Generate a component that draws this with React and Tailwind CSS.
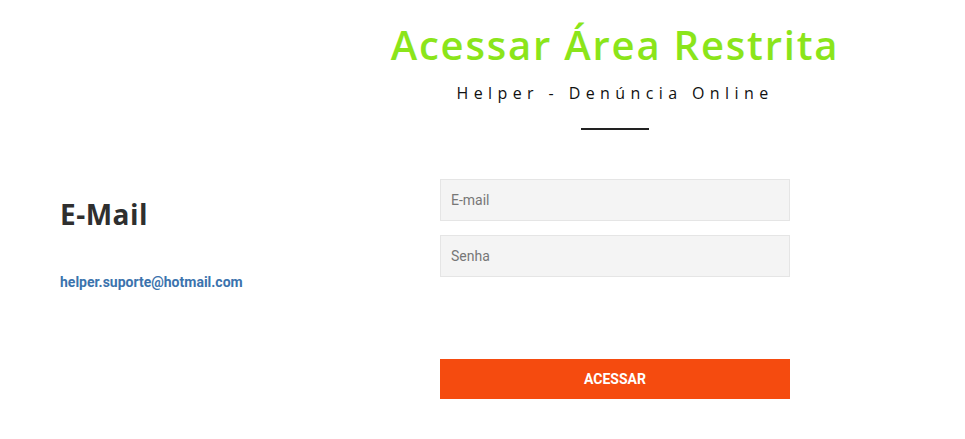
import React from 'react';

const heading = { fontFamily: '"Open Sans", "DejaVu Sans", sans-serif' };

export default function App() {
  return (
    <div className="w-[965px] h-[439px] bg-white flex font-['Roboto',sans-serif] overflow-hidden">
      {/* coluna esquerda: contato */}
      <div className="w-[440px] pl-[60px] pt-[196px]">
        <h2 style={heading} className="text-[28px] font-bold tracking-[0.5px] text-[#2f2f2f] leading-[36px]">E-Mail</h2>
        <a href="#" className="block mt-[40px] text-[14px] font-bold text-[#3b73ad] leading-[20px]">
          helper.suporte@hotmail.com
        </a>
      </div>

      {/* coluna direita: login */}
      <div className="w-[350px] flex flex-col items-center pt-[19px]">
        <h1 style={heading} className="whitespace-nowrap text-[40px] font-semibold tracking-[1.8px] text-[#8be51a] leading-[52px]">
          Acessar Área Restrita
        </h1>
        <p style={heading} className="whitespace-nowrap mt-[11px] text-[16px] tracking-[5.4px] text-[#111] leading-[22px]">
          Helper - Denúncia Online
        </p>
        <div className="mt-[24px] w-[68px] h-[2px] bg-[#222]"></div>

        <form className="w-full mt-[49px] flex flex-col">
          <input
            type="email"
            placeholder="E-mail"
            className="w-full h-[42px] px-[10px] bg-[#f4f4f4] border border-[#e5e5e5] text-[14px] text-[#555] placeholder:text-[#777] outline-none"
          />
          <input
            type="password"
            placeholder="Senha"
            className="w-full h-[42px] mt-[14px] px-[10px] bg-[#f4f4f4] border border-[#e5e5e5] text-[14px] text-[#555] placeholder:text-[#777] outline-none"
          />
          <button
            type="button"
            className="w-full h-[40px] mt-[82px] bg-[#f54b0f] text-white text-[14px] font-bold uppercase"
          >
            Acessar
          </button>
        </form>
      </div>
    </div>
  );
}
